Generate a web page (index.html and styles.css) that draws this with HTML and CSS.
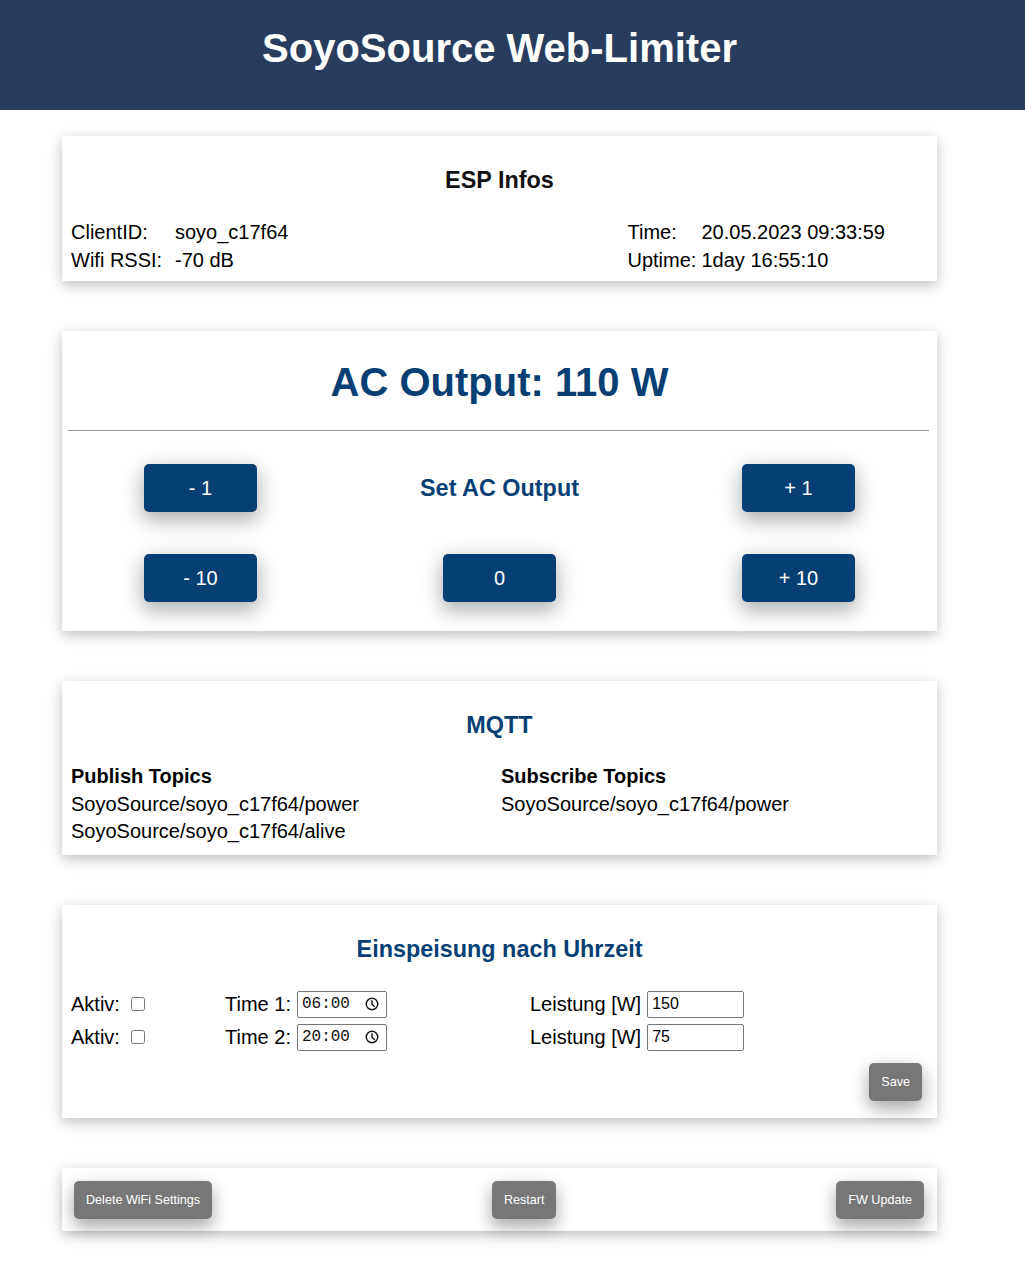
FILE: index.html
```html
<!DOCTYPE html>
<html lang="de">
<head>
<meta charset="utf-8">
<title>SoyoSource Web-Limiter</title>
<link rel="stylesheet" href="styles.css">
</head>
<body>
<header class="topbar">
  <h1 class="site-title">SoyoSource Web-Limiter</h1>
</header>
<main class="wrap">
  <section class="card card-esp">
    <h3 class="card-title dark">ESP Infos</h3>
    <div class="esp-grid">
      <div class="kv kv-left">
        <span>ClientID:</span><span>soyo_c17f64</span>
        <span>Wifi RSSI:</span><span>-70 dB</span>
      </div>
      <div class="kv kv-right">
        <span>Time:</span><span>20.05.2023 09:33:59</span>
        <span>Uptime:</span><span>1day 16:55:10</span>
      </div>
    </div>
  </section>

  <section class="card card-ac">
    <h1 class="ac-title">AC Output: 110 W</h1>
    <hr class="divider">
    <div class="ac-grid">
      <div class="cell"><button class="btn-blue">- 1</button></div>
      <div class="cell"><h3 class="set-title">Set AC Output</h3></div>
      <div class="cell"><button class="btn-blue">+ 1</button></div>
      <div class="cell"><button class="btn-blue">- 10</button></div>
      <div class="cell"><button class="btn-blue">0</button></div>
      <div class="cell"><button class="btn-blue">+ 10</button></div>
    </div>
  </section>

  <section class="card card-mqtt">
    <h3 class="card-title">MQTT</h3>
    <div class="mqtt-grid">
      <div class="topic-col">
        <h4 class="topic-head">Publish Topics</h4>
        <div>SoyoSource/soyo_c17f64/power</div>
        <div>SoyoSource/soyo_c17f64/alive</div>
      </div>
      <div class="topic-col">
        <h4 class="topic-head">Subscribe Topics</h4>
        <div>SoyoSource/soyo_c17f64/power</div>
      </div>
    </div>
  </section>

  <section class="card card-time">
    <h3 class="card-title">Einspeisung nach Uhrzeit</h3>
    <div class="time-grid">
      <label class="fld">Aktiv: <input type="checkbox" class="chk"></label>
      <label class="fld">Time 1: <span class="time-box"><input type="text" class="time-text" value="06:00"><svg class="clock" viewBox="0 0 16 16" width="14" height="14"><circle cx="8" cy="8" r="6.6" fill="none" stroke="#111" stroke-width="1.6"/><path d="M8 4.2V8.2L10.8 11" fill="none" stroke="#111" stroke-width="1.6" stroke-linecap="round" stroke-linejoin="round"/></svg></span></label>
      <label class="fld">Leistung [W] <input type="text" class="num-in" value="150"></label>
      <label class="fld">Aktiv: <input type="checkbox" class="chk"></label>
      <label class="fld">Time 2: <span class="time-box"><input type="text" class="time-text" value="20:00"><svg class="clock" viewBox="0 0 16 16" width="14" height="14"><circle cx="8" cy="8" r="6.6" fill="none" stroke="#111" stroke-width="1.6"/><path d="M8 4.2V8.2L10.8 11" fill="none" stroke="#111" stroke-width="1.6" stroke-linecap="round" stroke-linejoin="round"/></svg></span></label>
      <label class="fld">Leistung [W] <input type="text" class="num-in" value="75"></label>
    </div>
    <div class="save-row"><button class="btn-gray">Save</button></div>
  </section>

  <section class="card card-actions">
    <button class="btn-gray">Delete WiFi Settings</button>
    <button class="btn-gray">Restart</button>
    <button class="btn-gray">FW Update</button>
  </section>
</main>
</body>
</html>
```

FILE: styles.css
```css
* { box-sizing: border-box; }

body {
  margin: 0;
  background: #ffffff;
  font-family: "Liberation Sans", Arial, Helvetica, sans-serif;
  font-size: 20px;
  color: #000;
}

.topbar {
  background: #283c5e;
  height: 110px;
  padding-top: 25px;
}

.site-title {
  width: 999px;
  margin: 0;
  text-align: center;
  color: #ffffff;
  font-size: 40px;
  line-height: 46px;
  font-weight: bold;
}

.wrap {
  width: 999px;
  padding: 26px 0 40px;
}

.card {
  margin: 0 62px 50px;
  background: #fff;
  box-shadow: 0 4px 10px 0 rgba(0, 0, 0, 0.16), 0 4px 20px 0 rgba(0, 0, 0, 0.10);
}

.card-title {
  margin: 0 0 24px;
  text-align: center;
  font-size: 23.4px;
  line-height: 28px;
  font-weight: bold;
  color: #063f74;
}

.card-title.dark { color: #111; }

/* ESP infos */
.card-esp { padding: 30px 9px 7px; }

.esp-grid {
  display: flex;
  justify-content: space-between;
  padding-right: 43px;
}

.kv {
  display: grid;
  line-height: 28px;
}

.kv-left { grid-template-columns: 104px auto; }
.kv-right { grid-template-columns: 74px auto; }

/* AC output */
.card-ac { padding: 28px 0 29px; }

.ac-title {
  margin: 0;
  text-align: center;
  font-size: 40px;
  line-height: 46px;
  color: #063f74;
}

.divider {
  margin: 25px 8px 33px 6px;
  border: 0;
  border-top: 1px solid #9a9a9a;
  height: 0;
}

.ac-grid {
  display: grid;
  grid-template-columns: repeat(3, 299px);
  grid-auto-rows: 48px;
  row-gap: 42px;
  justify-content: center;
}

.cell {
  display: flex;
  align-items: center;
  justify-content: center;
}

.set-title {
  margin: 0;
  font-size: 23.4px;
  font-weight: bold;
  color: #063f74;
}

.btn-blue {
  width: 113px;
  height: 48px;
  border: 0;
  border-radius: 5px;
  background: #063f74;
  color: #fff;
  font-family: "Liberation Sans", Arial, sans-serif;
  font-size: 20px;
  box-shadow: 0 8px 16px 0 rgba(0, 0, 0, 0.18), 0 6px 24px 4px rgba(0, 0, 0, 0.14);
}

/* MQTT */
.card-mqtt { padding: 30px 9px 9px; }

.mqtt-grid {
  display: grid;
  grid-template-columns: 430px auto;
  line-height: 27.5px;
}

.topic-head {
  margin: 0;
  font-size: 20px;
  font-weight: bold;
}

/* Time card */
.card-time { padding: 30px 9px 17px; }

.time-grid {
  display: grid;
  grid-template-columns: 154px 305px auto;
  grid-auto-rows: 33px;
  align-items: center;
}

.card-time .card-title { margin-bottom: 25px; }

.fld {
  white-space: nowrap;
  display: flex;
  align-items: center;
}

.chk {
  width: 14px;
  height: 14px;
  margin: 0 0 0 11px;
}

.time-box {
  display: inline-flex;
  align-items: center;
  justify-content: space-between;
  width: 90px;
  height: 27px;
  margin-left: 6px;
  padding: 0 7px 0 4px;
  border: 1px solid #767676;
  border-radius: 2px;
  background: #fff;
}

.time-text {
  width: 50px;
  padding: 0;
  margin: 0;
  border: 0;
  outline: none;
  background: transparent;
  font-family: "Liberation Mono", monospace;
  font-size: 16px;
  color: #111;
}

.clock { display: block; }

.num-in {
  width: 97px;
  height: 27px;
  margin: 0 0 0 6px;
  padding: 1px 4px;
  border: 1px solid #767676;
  border-radius: 2px;
  font-family: "Liberation Sans", Arial, sans-serif;
  font-size: 16px;
  color: #000;
}

.save-row {
  display: flex;
  justify-content: flex-end;
  margin-top: 9px;
  padding-right: 6px;
}

.btn-gray {
  height: 38px;
  padding: 0 12px;
  border: 0;
  border-radius: 5px;
  background: #777777;
  color: #fff;
  font-family: "Liberation Sans", Arial, sans-serif;
  font-size: 12.6px;
  box-shadow: 0 8px 16px 0 rgba(0, 0, 0, 0.2), 0 6px 20px 0 rgba(0, 0, 0, 0.19);
}

/* Actions */
.card-actions {
  display: flex;
  justify-content: space-between;
  padding: 13px 13px 12px 12px;
}
```
